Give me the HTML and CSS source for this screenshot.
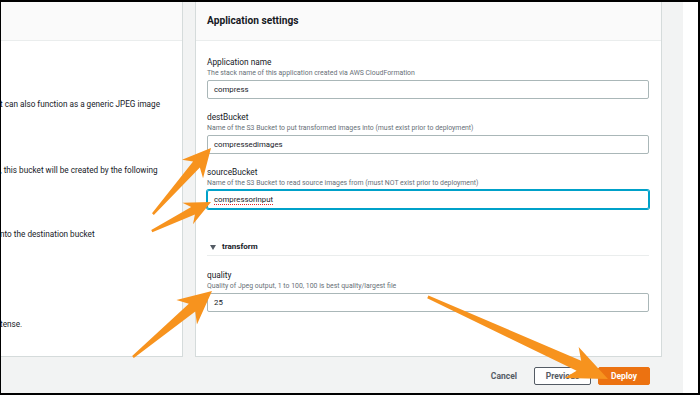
FILE: index.html
```html
<!DOCTYPE html>
<html lang="en">
<head>
<meta charset="utf-8">
<title>Application settings</title>
<link rel="stylesheet" href="styles.css">
</head>
<body>
<div class="frame">
  <div class="page">
    <div class="panels">
      <section class="panel panel-left">
        <div class="panel-head"></div>
        <div class="left-body">
          <p class="line l1">t can also function as a generic JPEG image</p>
          <p class="line l2">, this bucket will be created by the following</p>
          <p class="line l3">nto the destination bucket</p>
          <p class="line l4">tense.</p>
        </div>
      </section>
      <section class="panel panel-right">
        <div class="panel-head"><h2 class="title">Application settings</h2></div>
        <div class="form">
          <div class="field">
            <div class="label">Application name</div>
            <div class="desc">The stack name of this application created via AWS CloudFormation</div>
            <div class="input">compress</div>
          </div>
          <div class="field">
            <div class="label">destBucket</div>
            <div class="desc">Name of the S3 Bucket to put transformed images into (must exist prior to deployment)</div>
            <div class="input">compressedimages</div>
          </div>
          <div class="field">
            <div class="label">sourceBucket</div>
            <div class="desc">Name of the S3 Bucket to read source images from (must NOT exist prior to deployment)</div>
            <div class="input focused"><span class="misspelled">compressorinput</span></div>
          </div>
          <div class="section-head"><span class="caret"></span><span class="section-title">transform</span></div>
          <div class="field field-first">
            <div class="label">quality</div>
            <div class="desc">Quality of Jpeg output, 1 to 100, 100 is best quality/largest file</div>
            <div class="input">25</div>
          </div>
        </div>
      </section>
    </div>
    <div class="actions">
      <button class="btn btn-link">Cancel</button>
      <button class="btn btn-normal">Previous</button>
      <button class="btn btn-primary">Deploy</button>
    </div>
  </div>
  <div class="side"></div>
  <svg class="arrows" width="700" height="395" viewBox="0 0 700 395">
    <g fill="#f7931e">
      <polygon transform="translate(211 148) rotate(-48.7)" points="-88,-1.2 -22,-4.5 -28,-14 0,0 -28,14 -22,4.5 -88,1.2"/>
      <polygon transform="translate(211 202) rotate(-26.2)" points="-66,-1.2 -20,-4.2 -26,-12 0,0 -26,12 -20,4.2 -66,1.2"/>
      <polygon transform="translate(212 291) rotate(-39.9)" points="-103,-1.3 -26,-5 -33,-16 0,0 -33,16 -26,5 -103,1.3"/>
      <polygon transform="translate(608 379) rotate(24.5)" points="-198,-1.5 -32,-5.5 -40,-17 0,0 -40,17 -32,5.5 -198,1.5"/>
    </g>
  </svg>
</div>
</body>
</html>
```

FILE: styles.css
```css
* { box-sizing: border-box; }
html, body { margin: 0; padding: 0; background: #fff; }
body { font-family: Roboto, "Open Sans", sans-serif; color: #16191f; }

.frame {
  position: relative;
  width: 700px;
  height: 395px;
  border-style: solid;
  border-color: #000;
  border-width: 2px 2px 2px 1px;
  display: flex;
  overflow: hidden;
}

.page {
  width: 682px;
  background: #f2f3f3;
  display: flex;
  flex-direction: column;
}

.side { flex: 1; background: #fff; }

.panels {
  height: 355px;
  display: flex;
  gap: 12px;
  padding-right: 21px;
}

.panel {
  background: #fff;
  overflow: hidden;
  border-bottom: 1px solid #d5dbdb;
}

.panel-left {
  width: 182px;
  border-right: 1px solid #d5dbdb;
}

.panel-right {
  flex: 1;
  border-left: 1px solid #d5dbdb;
  border-right: 1px solid #d5dbdb;
}

.panel-head {
  height: 39px;
  background: #fafafa;
  border-bottom: 1px solid #eaeded;
}

.title {
  margin: 0;
  padding-left: 11px;
  font-size: 10.2px;
  line-height: 38px;
  font-weight: 700;
  color: #16191f;
}

.left-body { padding-top: 57px; }

.line {
  margin: 0 0 0 -1px;
  font-size: 8.2px;
  line-height: 12px;
  white-space: nowrap;
  color: #16191f;
}
.l2 { margin-top: 54px; }
.l3 { margin-top: 52px; }
.l4 { margin-top: 78px; }

.form { padding: 16px 12px 0 11px; }

.field { margin-bottom: 13px; }
.field-first { margin-top: 14px; }

.label {
  font-size: 8.3px;
  line-height: 11px;
  font-weight: 400;
  color: #16191f;
}

.desc {
  font-size: 6.9px;
  line-height: 10px;
  color: #687078;
  white-space: nowrap;
}

.input {
  margin-top: 2px;
  height: 19px;
  border: 1px solid #aab7b8;
  border-radius: 2px;
  padding-left: 6px;
  font-size: 7.8px;
  line-height: 17px;
  color: #16191f;
}

.input.focused {
  border-color: #00a1c9;
  box-shadow: 0 0 0 1px #00a1c9;
}

.misspelled {
  text-decoration: underline dotted #e0262b;
  text-underline-offset: 2px;
}

.section-head {
  display: flex;
  align-items: center;
  gap: 6px;
  padding: 19px 0 2px 3px;
  height: 34px;
  border-bottom: 1px solid #eaeded;
}

.caret {
  width: 0;
  height: 0;
  border-left: 3.5px solid transparent;
  border-right: 3.5px solid transparent;
  border-top: 5px solid #545b64;
}

.section-title {
  font-size: 8px;
  line-height: 12px;
  font-weight: 700;
  color: #16191f;
}

.actions {
  flex: 1;
  display: flex;
  justify-content: flex-end;
  align-items: flex-start;
  gap: 7px;
  padding: 10px 33px 0 0;
}

.btn {
  height: 18px;
  font-family: inherit;
  font-size: 8.5px;
  font-weight: 700;
  border-radius: 2px;
  padding: 0;
  cursor: pointer;
}

.btn-link {
  background: transparent;
  border: none;
  color: #545b64;
  padding: 0 10px;
}

.btn-normal {
  width: 57px;
  background: #fff;
  border: 1px solid #545b64;
  color: #545b64;
}

.btn-primary {
  width: 52px;
  background: #ec7211;
  border: 1px solid #ec7211;
  color: #fff;
}

.arrows {
  position: absolute;
  left: -1px;
  top: -2px;
  pointer-events: none;
}
```
